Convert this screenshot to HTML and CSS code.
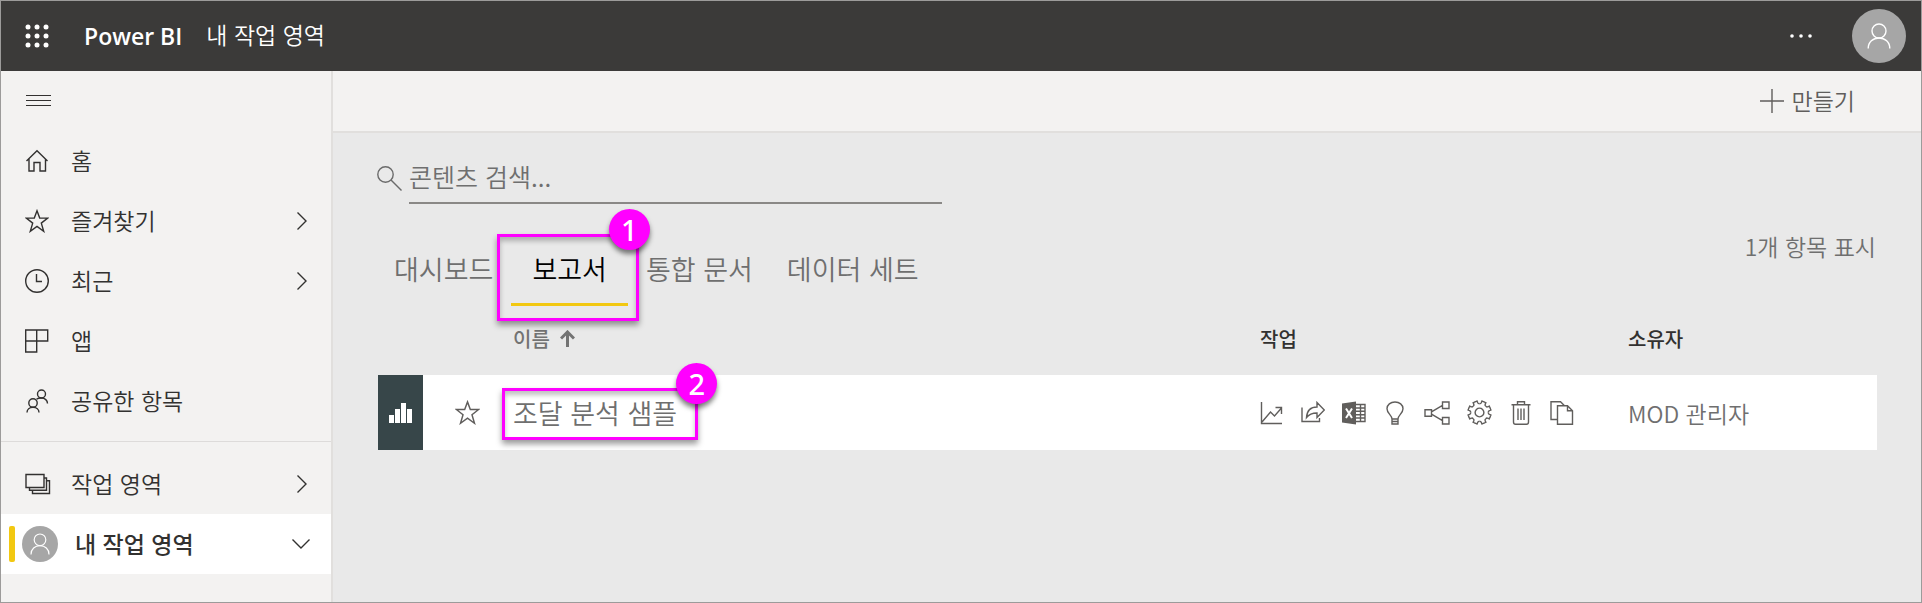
FILE: index.html
```html
<!DOCTYPE html>
<html lang="ko">
<head>
<meta charset="utf-8">
<meta name="viewport" content="width=device-width, initial-scale=1">
<title>Power BI</title>
<link rel="stylesheet" href="styles.css">
</head>
<body>
<svg class="sprite" aria-hidden="true">
  <symbol id="person" viewBox="0 0 24 26"><circle cx="12" cy="8" r="7"/><path d="M1.2 25.5C1.2 19 6 15 12 15s10.800 4 10.800 10.500"/></symbol>
  <symbol id="star" viewBox="0 0 24 24"><path d="M12 1.800l2.700 7.300h8l-6.400 5 2.400 8.200L12 17.400l-6.700 4.900 2.400-8.200-6.400-5h8z"/></symbol>
  <symbol id="chevron" viewBox="0 0 12 20"><path d="M1.500 1.500L10 10l-8.500 8.500"/></symbol>
  <symbol id="cog" viewBox="-12 -12 24 24"><path d="M-3.290-7.950Q-2.200-8.100-2.100-9L-1.940-11.100H1.940L2.100-9Q2.200-8.100 3.290-7.950"/></symbol>
</svg>
<div class="app">
  <header class="header">
    <button class="icon-btn" aria-label="앱 시작 관리자">
      <svg class="waffle" width="24" height="24" viewBox="0 0 24 24"><circle cx="3" cy="3" r="2.500"/><circle cx="12" cy="3" r="2.500"/><circle cx="21" cy="3" r="2.500"/><circle cx="3" cy="12" r="2.500"/><circle cx="12" cy="12" r="2.500"/><circle cx="21" cy="12" r="2.500"/><circle cx="3" cy="21" r="2.500"/><circle cx="12" cy="21" r="2.500"/><circle cx="21" cy="21" r="2.500"/></svg>
    </button>
    <a class="brand" href="#">Power BI</a>
    <a class="crumb" href="#">내 작업 영역</a>
    <button class="icon-btn more" aria-label="더 보기">
      <svg class="waffle" width="24" height="6" viewBox="0 0 24 6"><circle cx="3" cy="3" r="1.800"/><circle cx="12" cy="3" r="1.800"/><circle cx="21" cy="3" r="1.800"/></svg>
    </button>
    <button class="avatar avatar-lg" aria-label="계정"><svg class="line" width="24" height="26"><use href="#person"/></svg></button>
  </header>
  <div class="body">
    <nav class="sidebar">
      <button class="icon-btn menu" aria-label="탐색 창">
        <svg width="25" height="12" viewBox="0 0 25 12" class="line crisp"><path d="M0 .5h25M0 5.500h25M0 10.500h25"/></svg>
      </button>
      <ul class="nav-list">
        <li><a class="nav-item" href="#"><span class="nav-icon"><svg class="line" width="24" height="24" viewBox="0 0 24 24"><path d="M1.500 12L12 1.800 22.500 12M4 10v12h5v-8.500h6V22h5.500V10"/></svg></span><span class="nav-label">홈</span></a></li>
        <li><a class="nav-item" href="#"><span class="nav-icon"><svg class="line" width="24" height="24"><use href="#star"/></svg></span><span class="nav-label">즐겨찾기</span><svg class="line" width="12" height="20"><use href="#chevron"/></svg></a></li>
        <li><a class="nav-item" href="#"><span class="nav-icon"><svg class="line" width="24" height="24" viewBox="0 0 24 24"><circle cx="12" cy="12" r="11.300"/><path d="M11.500 5v7.500H17"/></svg></span><span class="nav-label">최근</span><svg class="line" width="12" height="20"><use href="#chevron"/></svg></a></li>
        <li><a class="nav-item" href="#"><span class="nav-icon"><svg class="line" width="24" height="24" viewBox="0 0 24 24"><path d="M.7 1h22v11H.7zM11.700 1v22H.7V12"/></svg></span><span class="nav-label">앱</span></a></li>
        <li><a class="nav-item" href="#"><span class="nav-icon"><svg class="line" width="24" height="24" viewBox="0 0 24 24"><circle cx="16.500" cy="5" r="4"/><circle cx="8" cy="14" r="4.200"/><path d="M2 23.500c0-3 2.500-5.300 6-5.300s6 2.300 6 5.300M11.500 10.300c1-.9 2.800-1.300 5-1.300 3.500 0 6 2.500 6 5.500"/></svg></span><span class="nav-label">공유한 항목</span></a></li>
      </ul>
      <ul class="nav-list nav-spaces">
        <li><a class="nav-item" href="#"><span class="nav-icon"><svg class="line" width="26" height="22" viewBox="0 0 26 22"><path d="M1 1.500h18v13H1zM19 5h2.500v12.200H4.500v-2.700M21.500 7.800h3V20.500H7.500v-3"/></svg></span><span class="nav-label">작업 영역</span><svg class="line" width="12" height="20"><use href="#chevron"/></svg></a></li>
        <li><a class="nav-item current" href="#"><span class="avatar avatar-sm"><svg class="line" width="20" height="22"><use href="#person"/></svg></span><span class="nav-label">내 작업 영역</span><svg class="line" width="20" height="12" viewBox="0 0 20 12"><path d="M1.500 1.500L10 10l8.500-8.500"/></svg></a></li>
      </ul>
    </nav>
    <main class="main">
      <div class="toolbar">
        <button class="create"><svg class="line" width="24" height="24" viewBox="0 0 24 24"><path d="M0 12h24M12 0v24"/></svg><span class="create-label">만들기</span></button>
      </div>
      <div class="content">
        <label class="search">
          <svg class="line" width="25" height="25" viewBox="0 0 25 25"><circle cx="8.500" cy="8.500" r="7.700"/><path d="M14 14l10.500 10.500"/></svg>
          <input type="text" placeholder="콘텐츠 검색..." aria-label="콘텐츠 검색">
        </label>
        <div class="tabs-row">
          <div class="tabs" role="tablist">
            <button class="tab" role="tab">대시보드</button>
            <button class="tab active" role="tab" aria-selected="true">보고서<span class="callout callout-tab"><span class="badge">1</span></span></button>
            <button class="tab" role="tab">통합 문서</button>
            <button class="tab" role="tab">데이터 세트</button>
          </div>
          <p class="count">1개 항목 표시</p>
        </div>
        <table class="reports">
          <colgroup><col class="col-type"><col class="col-star"><col><col class="col-actions"><col class="col-owner"></colgroup>
          <thead>
            <tr>
              <th></th><th></th>
              <th><button class="sort">이름 <svg width="15" height="18" viewBox="0 0 15 18"><path d="M7.500 17V3M1 8.500L7.500 2 14 8.500"/></svg></button></th>
              <th>작업</th>
              <th>소유자</th>
            </tr>
          </thead>
          <tbody>
            <tr>
              <td class="type"><svg width="24" height="20" viewBox="0 0 24 20"><path d="M0 12h5v8H0zM6 6h5v14H6zM12 0h5v20h-5zM18 6h5v14h-5z"/></svg></td>
              <td class="fav"><button class="icon-btn" aria-label="즐겨찾기에 추가"><svg class="line" width="25" height="25"><use href="#star"/></svg></button></td>
              <td><a class="report-name" href="#">조달 분석 샘플<span class="callout callout-name"><span class="badge">2</span></span></a></td>
              <td>
                <div class="actions">
                  <button class="icon-btn" aria-label="메트릭"><svg class="line" width="24" height="24" viewBox="0 0 24 24"><path d="M1.500 1v21.500H22M2 21l8.500-10 4 4L21.500 7M15.500 6.500h6V13"/></svg></button>
                  <button class="icon-btn" aria-label="공유"><svg class="line" width="24" height="24" viewBox="0 0 24 24"><path d="M1 6.500V20.500h17.500V17M5.500 16.500C6 9.500 10 6 16 6V1.500L23.300 9 16 16.500V12c-4.500 0-7.800 1-10.500 4.500z"/></svg></button>
                  <button class="icon-btn" aria-label="Excel에서 분석"><svg width="24" height="24" viewBox="0 0 24 24"><path class="fill" d="M0 2.500L14 .5v23L0 21.500z"/><path class="line" d="M14 3.500h9v17h-9M14 7h9M14 10.300h9M14 13.700h9M14 17h9M18.500 3.500v17"/><path class="mark" d="M4 7.500l6 9.500M10 7.500L4 17"/></svg></button>
                  <button class="icon-btn" aria-label="인사이트"><svg class="line" width="24" height="24" viewBox="0 0 24 24"><path d="M9 18c0-4-5-5.500-5-10.300C4 3.700 7.500 1 12 1s8 2.700 8 6.700C20 12.500 15 14 15 18zM9 18v5h6v-5M9 20.500h6"/></svg></button>
                  <button class="icon-btn" aria-label="관련 항목 보기"><svg class="line" width="26" height="24" viewBox="0 0 26 24"><path d="M1 8.800h6.500v6.500H1zM18.500 1H25v6.500h-6.500zM18.500 16.500H25V23h-6.500zM7.500 10.800l11-6.500M7.500 13.200l11 6.500"/></svg></button>
                  <button class="icon-btn" aria-label="설정"><svg class="line" width="25" height="25" viewBox="-12 -12 24 24"><circle r="4.200"/><g transform="rotate(22.5)"><use href="#cog" x="-12" y="-12" width="24" height="24"/><use href="#cog" x="-12" y="-12" width="24" height="24" transform="rotate(45)"/><use href="#cog" x="-12" y="-12" width="24" height="24" transform="rotate(90)"/><use href="#cog" x="-12" y="-12" width="24" height="24" transform="rotate(135)"/><use href="#cog" x="-12" y="-12" width="24" height="24" transform="rotate(180)"/><use href="#cog" x="-12" y="-12" width="24" height="24" transform="rotate(225)"/><use href="#cog" x="-12" y="-12" width="24" height="24" transform="rotate(270)"/><use href="#cog" x="-12" y="-12" width="24" height="24" transform="rotate(315)"/></g></svg></button>
                  <button class="icon-btn" aria-label="삭제"><svg class="line" width="24" height="24" viewBox="0 0 24 24"><path d="M2.500 3.800h19M8.500 3.800V.8h7v3M4.500 3.800V21q0 2.200 2 2.200h11q2 0 2-2.200V3.800M9 7.500V19M12 7.500V19M15 7.500V19"/></svg></button>
                  <button class="icon-btn" aria-label="복사본 저장"><svg class="line" width="24" height="24" viewBox="0 0 24 24"><path d="M7.500 18.500H1V.8h9.500l4 4M7.500 4.800h10l5 5v13.400h-15zM17.500 4.800v5h5"/></svg></button>
                </div>
              </td>
              <td class="owner">MOD 관리자</td>
            </tr>
          </tbody>
        </table>
      </div>
    </main>
  </div>
</div>
</body>
</html>
```

FILE: styles.css
```css
* { box-sizing: border-box; }

body {
  margin: 0;
  font-family: "Noto Sans CJK KR", sans-serif;
  font-weight: 350;
  font-size: 23px;
  line-height: 30px;
  color: #323130;
}

button, input {
  font: inherit;
  color: inherit;
  background: none;
  border: 0;
  padding: 0;
}

a { color: inherit; text-decoration: none; }
ul { list-style: none; margin: 0; padding: 0; }
svg { display: block; flex: none; }
.sprite { position: absolute; width: 0; height: 0; }
.line { fill: none; stroke: currentColor; stroke-width: 1.4; }
.crisp { shape-rendering: crispEdges; stroke-width: 1; }
.icon-btn { display: flex; align-items: center; justify-content: center; }

.app {
  display: flex;
  flex-direction: column;
  min-height: 100vh;
  border: 1px solid #9c9b9a;
}

.header {
  display: flex;
  align-items: center;
  height: 70px;
  padding: 0 15px 0 24px;
  background: #3b3a39;
  color: #fff;
}
.waffle { fill: currentColor; }
.brand {
  margin: 0 24px 0 35px;
  font-family: "Open Sans", sans-serif;
  font-weight: 600;
}
.crumb { flex: 1; padding-bottom: 4px; }
.more { margin-right: 39px; }

.avatar {
  display: flex;
  align-items: center;
  justify-content: center;
  flex: none;
  border-radius: 50%;
  background: #a6a6a6;
  color: #fff;
}
.avatar-lg { width: 54px; height: 54px; }
.avatar-sm { width: 36px; height: 36px; }

.body { display: flex; flex: 1; }

.sidebar {
  flex: none;
  width: 332px;
  border-right: 2px solid #e1dfdd;
  background: #f3f2f1;
}
.menu { height: 60px; margin-left: 25px; }
.nav-item {
  display: flex;
  align-items: center;
  height: 60px;
  padding: 0 23px 0 24px;
}
.nav-icon { flex: none; width: 46px; }
.nav-label { flex: 1; padding-bottom: 2px; }
.nav-spaces { margin-top: 10px; padding-top: 12px; border-top: 1px solid #dddbda; }
.current {
  padding: 0 20px 0 8px;
  background: #fff;
  font-weight: 500;
}
.current::before {
  content: "";
  width: 6px;
  height: 36px;
  margin-right: 7px;
  border-radius: 2px;
  background: #f2c811;
}
.current .nav-label { margin-left: 17px; }

.main { flex: 1; min-width: 0; background: #e9e9e9; color: #605e5c; }
.toolbar {
  display: flex;
  justify-content: flex-end;
  height: 62px;
  padding-right: 66px;
  border-bottom: 2px solid #e1dfdd;
  background: #f3f2f1;
}
.create { display: flex; align-items: center; gap: 8px; }
.create-label { padding-bottom: 2px; }

.content { padding: 27px 45px 0 44px; }
.search { display: flex; align-items: center; gap: 7px; width: 565px; color: #6b6b6b; }
.search .line { margin-bottom: 8px; }
.search input {
  flex: 1;
  min-width: 0;
  height: 44px;
  padding-bottom: 10px;
  border-bottom: 2px solid #8a8886;
  font-size: 25px;
}
.search input::placeholder { color: #6f6f6f; opacity: 1; }

.tabs-row {
  display: flex;
  justify-content: space-between;
  align-items: flex-start;
  padding: 27px 0 0 1px;
  color: #6f6f6f;
}
.tabs { display: flex; gap: 2px; padding-top: 3px; }
.tab {
  position: relative;
  height: 72px;
  padding: 0 16px;
  border-bottom: 3px solid transparent;
  font-size: 27px;
}
.active { padding: 0 21px; border-color: #f2c811; color: #000; }
.count { margin: 0; }

.callout {
  position: absolute;
  border: 3px solid #f0f;
  box-shadow: 0 4px 6px rgba(0, 0, 0, .4), inset 0 4px 5px rgba(0, 0, 0, .25);
  pointer-events: none;
}
.callout-tab { inset: 0 -11px -18px -14px; }
.callout-name { inset: -4px -21px -6px -11px; }
.badge {
  position: absolute;
  top: -28px;
  right: -22px;
  width: 41px;
  height: 41px;
  border-radius: 50%;
  background: #f0f;
  box-shadow: 0 4px 5px rgba(0, 0, 0, .5);
  color: #fff;
  font: 500 29px/41px "Noto Sans", sans-serif;
  text-align: center;
}
.callout-tab .badge { right: -14px; }

.reports { width: 100%; margin-left: 1px; table-layout: fixed; border-collapse: collapse; }
.reports th, .reports td { padding: 0; text-align: left; }
.col-type { width: 45px; }
.col-star { width: 90px; }
.col-actions { width: 368px; }
.col-owner { width: 249px; }
.reports th { height: 69px; padding-bottom: 4px; font-size: 20px; font-weight: 500; color: #323130; }
.sort { display: flex; align-items: center; gap: 10px; color: #737373; }
.sort svg { fill: none; stroke: currentColor; stroke-width: 3; }
.reports tbody tr { height: 75px; background: #fff; }
.reports .type { background: #374649; }
.type svg { margin: 0 auto; fill: #fff; }
.fav .icon-btn { margin-left: 32px; }
.report-name { position: relative; display: inline-block; line-height: 42px; font-size: 27px; color: #6f6f6f; }
.actions { display: flex; gap: 17px; }
.fill { fill: #605e5c; }
.mark { fill: none; stroke: #fff; stroke-width: 2; }
.owner { color: #6f6f6f; }
```
